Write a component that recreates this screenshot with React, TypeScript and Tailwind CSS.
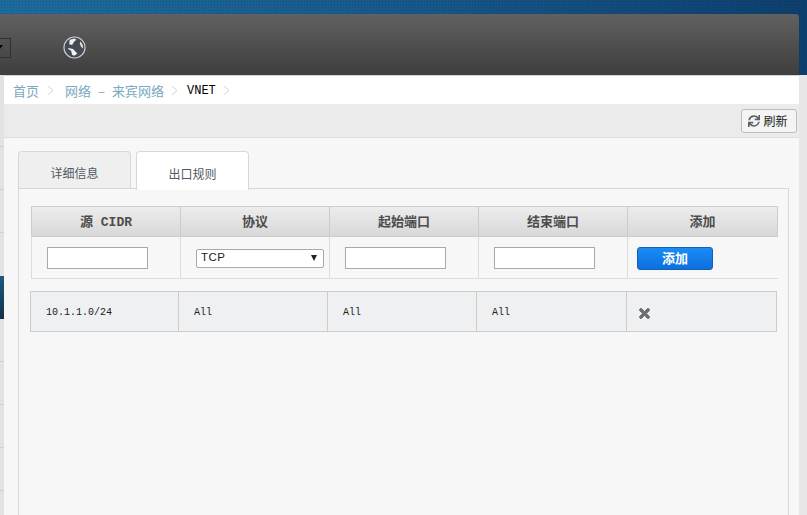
import { FaSync, FaTimes } from "react-icons/fa";

const sans = "font-['Noto_Sans_CJK_SC','Liberation_Sans',sans-serif]";
const headerFont = "font-['Liberation_Mono','Noto_Sans_CJK_SC',monospace]";

const headers = ["源 CIDR", "协议", "起始端口", "结束端口", "添加"];
const ruleCells = ["10.1.1.0/24", "All", "All", "All"];

function Chevron() {
  return (
    <svg width="7" height="11" viewBox="0 0 7 11" className="shrink-0">
      <path d="M1 1l5 4.500L1 10" fill="none" stroke="#ccd5d9" strokeWidth="1" />
    </svg>
  );
}

function Globe() {
  return (
    <svg width="23" height="23" viewBox="0 0 24 24">
      <circle cx="12" cy="12" r="11" fill="#454b54" stroke="#c9ccd0" strokeWidth="1.200" />
      <path d="M7 4l5-1.500 2 1.500-2.500 2-2 3.500-3-1z" fill="#eef0f2" />
      <path d="M18 5.500l2.500 3.500.5 4-2-1.500-1.500-3.500z" fill="#dfe2e5" />
      <path d="M5.500 12.500l5 1 4.500 5-3.500 2-2-1-1-4-3-2z" fill="#f2f3f4" />
    </svg>
  );
}

function TextInput() {
  return <input type="text" className="block h-[22px] w-[101px] border border-[#a9a9a9] bg-white" />;
}

function SideRows() {
  return (
    <div className="flex w-[4px] shrink-0 flex-col bg-[#e4e2e2] pt-[29px]">
      <div className="h-[43px] shrink-0 border-b border-[#d2d0d0]" />
      <div className="h-[43px] shrink-0 border-b border-[#d2d0d0]" />
      <div className="h-[43px] shrink-0 border-b border-[#d2d0d0]" />
      <div className="h-[43px] shrink-0" />
      <div className="h-[43px] shrink-0 bg-gradient-to-b from-[#1d5a80] to-[#123247]" />
      <div className="h-[43px] shrink-0 border-b border-[#d2d0d0]" />
      <div className="h-[43px] shrink-0 border-b border-[#d2d0d0]" />
      <div className="h-[43px] shrink-0 border-b border-[#d2d0d0]" />
      <div className="h-[43px] shrink-0 border-b border-[#d2d0d0]" />
    </div>
  );
}

export default function App() {
  return (
    <div className={`flex h-[515px] w-[807px] flex-col overflow-hidden bg-[#e8e6e6] ${sans}`}>
      {/* dotted top band with the header bar sitting on it */}
      <div className="h-[75px] shrink-0 bg-[radial-gradient(rgba(0,0,0,0.14)_1px,transparent_1px),linear-gradient(to_right,#1d6a9c,#17588a,#0d3f6e)] bg-[length:3px_3px,100%_100%] pt-[14px] pr-[8px]">
        <div className="flex h-[61px] items-center overflow-hidden rounded-tr-[4px] bg-gradient-to-b from-[#616161] to-[#3f3e3e] pt-[6px]">
          <div className="-ml-[2px] flex h-[20px] w-[13px] shrink-0 items-center justify-start border border-[#303030]">
            <span className="-ml-[4px] h-0 w-0 shrink-0 border-x-[4px] border-t-[5px] border-x-transparent border-t-black" />
          </div>
          <div className="ml-[52px]">
            <Globe />
          </div>
        </div>
      </div>

      <div className="flex min-h-0 flex-1">
        <SideRows />
        <main className="flex w-[795px] shrink-0 flex-col bg-[#f7f7f7]">
          {/* breadcrumb */}
          <nav className="flex h-[29px] shrink-0 items-center border-t border-[#cfd3d3] bg-white pt-[1px] pl-[9px] text-[13px] text-[#7aa9c0]">
            <span>首页</span>
            <span className="ml-[8px]"><Chevron /></span>
            <span className="ml-[11px]">网络</span>
            <span className="mx-[7px]">–</span>
            <span>来宾网络</span>
            <span className="ml-[7px]"><Chevron /></span>
            <span className="ml-[9px] pt-[1px] font-['Liberation_Mono',monospace] text-[12px] text-black">VNET</span>
            <span className="ml-[7px]"><Chevron /></span>
          </nav>

          {/* toolbar */}
          <div className="flex h-[34px] shrink-0 items-center justify-end border-b border-[#dfdfdf] bg-[#ebebeb] pr-[2px]">
            <button className="flex h-[24px] w-[56px] items-center justify-center gap-[3px] rounded-[3px] border border-[#bcbcbc] bg-[#f4f4f4] pr-[2px] text-[12px] text-[#1a1a1a]">
              <FaSync className="text-[12px] text-[#5b6166]" />
              <span>刷新</span>
            </button>
          </div>

          {/* tabs and panel */}
          <div className="flex min-h-0 flex-1 flex-col pt-[13px] pl-[14px] pr-[10px]">
            <div className="relative z-10 flex h-[37px] shrink-0 items-start gap-[5px]">
              <div className="flex h-[37px] w-[113px] items-center justify-center rounded-t-[4px] border border-b-0 border-[#d8d8d8] bg-[#efefef] pt-[6px] text-[12px] text-[#4f5a62]">详细信息</div>
              <div className="flex h-[39px] w-[113px] items-center justify-center rounded-t-[4px] border border-b-0 border-[#d8d8d8] bg-white pt-[5px] text-[12px] text-[#4f5a62]">出口规则</div>
            </div>
            <div className="min-h-0 flex-1 border-t border-l border-r border-[#d8d8d8] bg-[#f7f7f7] pt-[17px] pl-[12px]">
              <div className="w-[747px]">
                {/* add rule form */}
                <div className="grid h-[31px] grid-cols-[148px_149px_149px_149px_150px] border border-[#cccccc] bg-gradient-to-b from-[#ededed] to-[#d8d8d8]">
                  {headers.map((label, i) => (
                    <div key={label} className={`flex items-center justify-center pt-[2px] text-[13px] font-bold text-[#4c4c4c] ${headerFont} ${i > 0 ? "border-l border-[#cccccc]" : ""}`}>
                      {label}
                    </div>
                  ))}
                </div>
                <div className="grid h-[42px] grid-cols-[149px_149px_149px_149px_150px] border-b border-[#dcdcdc]">
                  <div className="flex items-center border-l border-[#dcdcdc] pl-[15px]"><TextInput /></div>
                  <div className="flex items-center border-l border-[#dcdcdc] pl-[15px]">
                    <div className="mt-[1px] flex h-[19px] w-[128px] items-center justify-between rounded-[2px] border border-[#a9a9a9] bg-white pl-[4px] pr-[6px] font-['Liberation_Sans',sans-serif] text-[11.500px] tracking-[0.5px] text-[#222]">
                      <span>TCP</span>
                      <span className="h-0 w-0 border-x-[3px] border-t-[6px] border-x-transparent border-t-[#222]" />
                    </div>
                  </div>
                  <div className="flex items-center border-l border-[#dcdcdc] pl-[15px]"><TextInput /></div>
                  <div className="flex items-center border-l border-[#dcdcdc] pl-[15px]"><TextInput /></div>
                  <div className="flex items-center border-l border-[#dcdcdc] pl-[9px]">
                    <button className="mt-[1px] flex h-[23px] w-[76px] items-center justify-center rounded-[3px] border border-[#1561b0] bg-gradient-to-b from-[#1b8cf5] to-[#0d6fe0] text-[13px] font-bold text-white">添加</button>
                  </div>
                </div>

                {/* existing rules */}
                <div className="-ml-px mt-[12px] grid h-[41px] w-[747px] grid-cols-[147px_149px_149px_150px_150px] border border-[#cccccc] bg-[#eff0f2]">
                  {ruleCells.map((cell, i) => (
                    <div key={i} className={`flex items-center pt-[2px] pl-[15px] font-['Liberation_Mono',monospace] text-[10px] text-[#222] ${i > 0 ? "border-l border-[#cccccc]" : ""}`}>
                      {cell}
                    </div>
                  ))}
                  <div className="flex items-center border-l border-[#cccccc] pt-[3px] pl-[10px]">
                    <FaTimes className="text-[15px] text-[#6e6e6e]" stroke="currentColor" strokeWidth={30} />
                  </div>
                </div>
              </div>
            </div>
          </div>
        </main>
      </div>
    </div>
  );
}
